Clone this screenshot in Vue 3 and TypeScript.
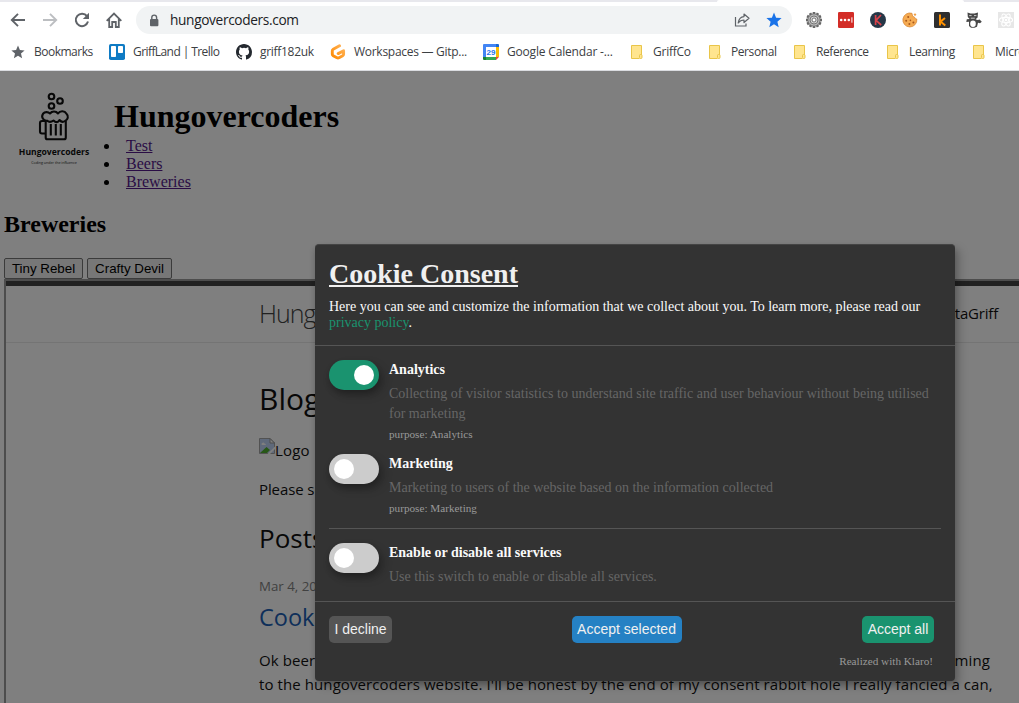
<script setup lang="ts">
interface Bookmark { icon: string; label: string; spacing: number }
interface Service { title: string; text: string; purpose: string; on: boolean }

const bookmarks: Bookmark[] = [
  { icon: 'star', label: 'Bookmarks', spacing: -0.5 },
  { icon: 'trello', label: 'GriffLand | Trello', spacing: -0.58 },
  { icon: 'github', label: 'griff182uk', spacing: -0.3 },
  { icon: 'gitpod', label: 'Workspaces — Gitp...', spacing: -0.28 },
  { icon: 'calendar', label: 'Google Calendar -...', spacing: -0.18 },
  { icon: 'folder', label: 'GriffCo', spacing: -0.25 },
  { icon: 'folder', label: 'Personal', spacing: -0.42 },
  { icon: 'folder', label: 'Reference', spacing: -0.42 },
  { icon: 'folder', label: 'Learning', spacing: -0.38 },
  { icon: 'folder', label: 'Microsoft', spacing: -0.3 },
]
const services: Service[] = [
  {
    title: 'Analytics',
    text: 'Collecting of visitor statistics to understand site traffic and user behaviour without being utilised for marketing',
    purpose: 'purpose: Analytics',
    on: true,
  },
  {
    title: 'Marketing',
    text: 'Marketing to users of the website based on the information collected',
    purpose: 'purpose: Marketing',
    on: false,
  },
]
const teeth = Array.from({ length: 12 }, (_, i) => i * 30)
</script>

<template>
  <div class="window">
    <div class="chrome">
      <div class="tabs"><div class="tab"></div></div>
      <div class="toolbar">
        <svg class="nav" viewBox="0 0 16 16"><path d="M15 8H2M8 1.8L1.8 8L8 14.2" fill="none" stroke="#5f6368" stroke-width="1.9" /></svg>
        <svg class="nav" viewBox="0 0 16 16"><path d="M1 8H14M8 1.8L14.2 8L8 14.2" fill="none" stroke="#bcbec1" stroke-width="1.9" /></svg>
        <svg class="nav" viewBox="0 0 16 16"><path d="M13 4.2A6.2 6.2 0 1 0 14 9.6" fill="none" stroke="#5f6368" stroke-width="2" /><path d="M15 .8V7H8.8Z" fill="#5f6368" /></svg>
        <svg class="nav" viewBox="0 0 16 16"><path d="M3.2 7V15H6.2V10H9.8V15H12.8V7M.7 8.8L8 1.5L15.3 8.8" fill="none" stroke="#5f6368" stroke-width="1.8" /></svg>
        <div class="omnibox">
          <svg class="lock" viewBox="0 0 10 13"><rect x="1" y="5" width="8.4" height="7.2" rx="1" fill="#5f6368" /><path d="M2.8 5.5V3.5a2.4 2.4 0 0 1 4.8 0V5.5" fill="none" stroke="#5f6368" stroke-width="1.4" /></svg>
          <span class="url">hungovercoders.com</span>
          <svg class="share" viewBox="0 0 16 16"><path d="M1.5 5V14H12V11.5" fill="none" stroke="#5f6368" stroke-width="1.2" /><path d="M4.2 11C4.8 6.5 7 4.8 10 4.6V2L15 6.3L10 10.5V8C7.5 8 5.8 8.8 4.2 11Z" fill="none" stroke="#5f6368" stroke-width="1.2" stroke-linejoin="round" /></svg>
          <svg class="fav" viewBox="0 0 16 16"><path d="M8 .6L10.1 5.7L15.6 6.1L11.4 9.7L12.7 15.2L8 12.2L3.3 15.2L4.6 9.7L.4 6.1L5.9 5.7Z" fill="#1a73e8" /></svg>
        </div>
        <div class="extensions">
          <svg viewBox="0 0 16 16">
            <g fill="#666"><rect v-for="a in teeth" :key="a" x="6.7" y="0" width="2.6" height="4" :transform="`rotate(${a} 8 8)`" /></g>
            <circle cx="8" cy="8" r="6.2" fill="#b5b5b5" stroke="#666" stroke-width=".8" /><circle cx="8" cy="8" r="4" fill="#d5d5d5" stroke="#777" /><circle cx="8" cy="8" r="2" fill="#fff" stroke="#555" stroke-width=".8" />
          </svg>
          <svg viewBox="0 0 16 16"><rect width="16" height="16" rx="1.3" fill="#d32d27" /><g fill="#fff"><circle cx="3.2" cy="8" r="1.3" /><circle cx="7" cy="8" r="1.3" /><circle cx="10.8" cy="8" r="1.3" /><rect x="13.4" y="5.3" width="1" height="5.4" /></g></svg>
          <svg viewBox="0 0 16 16"><circle cx="8" cy="8" r="8" fill="#263747" /><path d="M5.6 3V13M11 3L6 8.3L11.2 13" fill="none" stroke="#d8434b" stroke-width="1.7" /></svg>
          <svg viewBox="0 0 16 16"><path d="M10 1.3A7 7 0 1 0 14.8 7Q13 7.2 12.6 5.2Q10 5 10 1.3Z" fill="#f5ab52" stroke="#d5832f" stroke-width=".7" /><circle cx="13" cy="2.6" r="1.2" fill="#efa04a" /><g fill="#a9581c"><circle cx="6.2" cy="5" r="1" /><circle cx="4.2" cy="8.8" r="1" /><circle cx="8.4" cy="8.4" r=".8" /><circle cx="7.4" cy="12" r="1" /><circle cx="11.4" cy="10.5" r="1" /></g></svg>
          <svg viewBox="0 0 16 16"><rect width="16" height="16" rx="1.5" fill="#2f2f2f" /><path d="M6 2.5V13.5M11 6L6.5 9.6L11.3 13.5" fill="none" stroke="#ff9100" stroke-width="2" /></svg>
          <svg viewBox="0 0 16 16"><path d="M1.5 .5L4.5 1.5H8.5L12 .5L11.6 5.5L9.6 7.2Q11.5 8.6 13.6 7.6L15.8 9.8L14 11.2L12 10.8L11 14.8L8.5 15.7H5L3 14V9.8L.3 10L.8 7.2L3.6 7L1.8 5Z" fill="#484848" /><ellipse cx="7" cy="11.7" rx="2.8" ry="3.3" fill="#fff" /><path d="M3.2 3.6H5.6M8 3.6H10.4M4.8 6.2H8.8" stroke="#ccc" stroke-width="1" /></svg>
          <svg viewBox="0 0 16 16"><rect width="16" height="16" fill="#e7e7e7" /><g fill="none" stroke="#fff" stroke-width="1.1"><ellipse cx="8" cy="8" rx="6.6" ry="2.6" /><ellipse cx="8" cy="8" rx="6.6" ry="2.6" transform="rotate(60 8 8)" /><ellipse cx="8" cy="8" rx="6.6" ry="2.6" transform="rotate(120 8 8)" /></g><circle cx="8" cy="8" r="1.3" fill="#fff" /></svg>
        </div>
      </div>
      <div class="bookmarks">
        <div v-for="b in bookmarks" :key="b.label" class="bookmark">
          <svg v-if="b.icon === 'star'" viewBox="0 0 16 16"><path d="M8 1.5L9.9 6L14.6 6.4L11 9.5L12.1 14.2L8 11.7L3.9 14.2L5 9.5L1.4 6.4L6.1 6Z" fill="#5f6368" /></svg>
          <svg v-else-if="b.icon === 'trello'" viewBox="0 0 16 16"><rect width="16" height="16" rx="1.8" fill="#0f7bc4" /><rect x="2" y="2" width="5" height="11" rx=".8" fill="#fff" /><rect x="9" y="2" width="5" height="7" rx=".8" fill="#fff" /></svg>
          <svg v-else-if="b.icon === 'github'" viewBox="0 0 16 16"><path fill="#24292f" d="M8 0C3.58 0 0 3.58 0 8c0 3.54 2.29 6.53 5.47 7.59.4.07.55-.17.55-.38 0-.19-.01-.82-.01-1.49-2.01.37-2.53-.49-2.69-.94-.09-.23-.48-.94-.82-1.13-.28-.15-.68-.52-.01-.53.63-.01 1.08.58 1.23.82.72 1.21 1.87.87 2.33.66.07-.52.28-.87.51-1.07-1.78-.2-3.64-.89-3.64-3.95 0-.87.31-1.59.82-2.15-.08-.2-.36-1.02.08-2.12 0 0 .67-.21 2.2.82a7.6 7.6 0 0 1 4 0c1.53-1.04 2.2-.82 2.2-.82.44 1.1.16 1.92.08 2.12.51.56.82 1.27.82 2.15 0 3.07-1.87 3.75-3.65 3.95.29.25.54.73.54 1.48 0 1.07-.01 1.93-.01 2.2 0 .21.15.46.55.38A8.01 8.01 0 0 0 16 8c0-4.42-3.58-8-8-8Z" /></svg>
          <svg v-else-if="b.icon === 'gitpod'" viewBox="0 0 16 16"><defs><linearGradient id="pod" x1="1" y1="0" x2="0" y2="1"><stop offset="0" stop-color="#ffb45b" /><stop offset="1" stop-color="#ff8a00" /></linearGradient></defs><path d="M9.5 1.8L3.2 5.3Q2.3 5.8 2.3 6.8V10.3Q2.3 11.2 3.2 11.7L7 13.8Q8 14.3 9 13.8L12.7 11.7Q13.6 11.2 13.6 10.2V6.7L8.2 9.6" fill="none" stroke="url(#pod)" stroke-width="2.9" stroke-linecap="round" stroke-linejoin="round" /></svg>
          <svg v-else-if="b.icon === 'calendar'" viewBox="0 0 16 16"><path d="M0 1a1 1 0 0 1 1-1H13V3H3V13H0Z" fill="#4285f4" /><path d="M13 0H15a1 1 0 0 1 1 1V3H13Z" fill="#1967d2" /><path d="M13 3H16V13H13Z" fill="#fbbc04" /><path d="M3 13H13V16H3Z" fill="#34a853" /><path d="M0 13H3V16H1a1 1 0 0 1-1-1Z" fill="#188038" /><path d="M13 13H16L13 16Z" fill="#ea4335" /><rect x="3" y="3" width="10" height="10" fill="#fff" /><text x="8" y="11" text-anchor="middle" class="day">29</text></svg>
          <svg v-else viewBox="0 0 16 16"><path d="M2.5 1.5H12.5V11M10.5 14.5H2.5V1.5" fill="#ffe58f" stroke="#e9c549" /><path d="M3 2H12V11L10 14H3Z" fill="#ffe58f" /><rect x="10.5" y="10.5" width="2.5" height="4" rx="1" fill="#ffe58f" stroke="#e9c549" /></svg>
          <span :style="{ letterSpacing: b.spacing + 'px' }">{{ b.label }}</span>
        </div>
      </div>
    </div>

    <div class="page">
      <header class="site">
        <div class="brand">
          <svg class="mug" viewBox="0 0 32 50" fill="none" stroke="#111" stroke-width="2.1" stroke-linejoin="round"><circle cx="13.5" cy="4.5" r="2.8" /><circle cx="22" cy="9" r="2.8" /><circle cx="13.5" cy="14" r="2.8" /><path d="M9 28.7A4.4 4.4 0 0 1 5 21.8A4.8 4.8 0 0 1 12 21.5A5 5 0 0 1 20 21.5A5 5 0 0 1 28.5 21.8A4.3 4.3 0 0 1 27 29Q24 31 21.5 28Q19 32 15.5 28.5Q12 31 9 28.7Z" /><path d="M7.7 29V45.5Q7.7 47.3 9.5 47.3H26Q27.8 47.3 27.8 45.5V29M7.5 29H4Q2 29 2 31V39.5Q2 41.5 4 41.5H7.5M12.8 32V43.5M17.8 32V43.5M22.8 32V43.5" /></svg>
          <div class="brand-name">Hungovercoders</div>
          <div class="brand-tag">Coding under the influence</div>
        </div>
        <div>
          <h1>Hungovercoders</h1>
          <ul><li><a>Test</a></li><li><a>Beers</a></li><li><a>Breweries</a></li></ul>
        </div>
      </header>
      <h2 class="section">Breweries</h2>
      <div class="tabs-row"><button class="rebel">Tiny Rebel</button><button class="devil">Crafty Devil</button></div>
      <div class="frame">
        <div class="blog-header"><span class="blog-title">Hungovercoders</span><span class="author">DataGriff</span></div>
        <div class="blog">
          <h1>Blogs</h1>
          <div class="logo-row">
            <svg viewBox="0 0 16 16"><path d="M.5 .5H11L15.5 5V15.5H.5Z" fill="#bfd3f5" stroke="#a4a4a4" /><path d="M11 .5V5H15.5Z" fill="#fff" stroke="#999" /><path d="M2.5 6.2a1.6 1.6 0 0 1 3-.8 1.2 1.2 0 0 1 1.2 1.7H2.8Z" fill="#fff" /><path d="M1 15L7.5 9L11 12L8 15Z" fill="#4fae2e" /><path d="M8.5 16L16 8.5V11L11 16Z" fill="#fff" /></svg><span>Logo</span>
          </div>
          <p class="please">Please see the posts below.</p>
          <h2>Posts</h2>
          <div class="date">Mar 4, 2022</div>
          <h3>Cookie Consent</h3>
          <div class="article">
            <div class="split"><span>Ok beer</span><span>ming</span></div>
            <div class="line">to the hungovercoders website. I'll be honest by the end of my consent rabbit hole I really fancied a can,</div>
            <div class="line">but I actually learnt a lot and wanted to add some of how I got on here as others may need help.</div>
          </div>
        </div>
      </div>
      <div class="dim"></div>
    </div>

    <section class="modal">
      <header class="modal-header">
        <h1>Cookie Consent</h1>
        <p>Here you can see and customize the information that we collect about you. To learn more, please read our<br><a>privacy policy</a>.</p>
      </header>
      <div class="modal-body">
        <div v-for="s in services" :key="s.title" class="service">
          <div class="switch" :class="{ on: s.on }"><i></i></div>
          <div class="info">
            <b>{{ s.title }}</b>
            <p>{{ s.text }}</p>
            <small>{{ s.purpose }}</small>
          </div>
        </div>
        <div class="service all">
          <div class="switch"><i></i></div>
          <div class="info"><b>Enable or disable all services</b><p>Use this switch to enable or disable all services.</p></div>
        </div>
      </div>
      <footer>
        <div class="actions"><button class="decline">I decline</button><button class="selected">Accept selected</button><button class="accept">Accept all</button></div>
        <div class="powered">Realized with Klaro!</div>
      </footer>
    </section>
  </div>
</template>

<style>
body { margin: 0; overflow: hidden; }
</style>
<style scoped>
* { box-sizing: border-box; }
h1, h2, h3, p, ul { margin: 0; }
svg { display: block; flex: none; }
button { font-family: "Liberation Sans", Arial, sans-serif; padding: 0; white-space: nowrap; }
.window { position: relative; width: 1019px; height: 703px; overflow: hidden; display: flex; flex-direction: column; background: #fff; font-family: "Liberation Serif", "Times New Roman", serif; }
.chrome { height: 71px; flex: none; border-bottom: 1px solid #dadce0; font-family: "Open Sans", "Noto Sans", sans-serif; color: #3c4043; }
.tabs { height: 2px; background: #e8e8ed; display: flex; }
.tab { margin-left: 717px; width: 247px; background: #fff; border-radius: 2px 2px 0 0; }
.toolbar { height: 36px; display: flex; align-items: center; padding-left: 10px; }
.nav { width: 16px; height: 16px; margin-right: 16px; }
.omnibox { width: 656px; height: 28px; margin-left: -2px; border-radius: 14px; background: #f1f3f4; display: flex; align-items: center; padding: 0 10px 0 13px; }
.lock { width: 10px; height: 13px; }
.url { margin-left: 11px; font-size: 13.7px; color: #202124; line-height: 20px; letter-spacing: -.35px; }
.share { width: 16px; height: 16px; margin-left: auto; }
.fav { width: 16px; height: 16px; margin-left: 16px; }
.extensions { display: flex; gap: 16px; margin-left: 14px; }
.extensions svg { width: 16px; height: 16px; }
.bookmarks { display: grid; height: 28px; padding-left: 10px; grid-template-columns: 99px 127px 94px 153px 146px 78px 85px 93px 86px 90px; align-items: center; }
.bookmark { display: flex; gap: 8px; align-items: center; font-size: 12px; line-height: 18px; white-space: nowrap; }
.bookmark svg { width: 16px; height: 16px; }
.day { font: bold 8px "Liberation Sans", sans-serif; fill: #1a73e8; }

.page { position: relative; flex: 1; min-height: 0; overflow: hidden; padding: 8px 0 0 4px; background: #fff; color: #000; }
.dim { position: absolute; inset: 0; background: rgba(0, 0, 0, .5); }
.site { display: flex; height: 131px; }
.brand { width: 100px; display: flex; flex-direction: column; align-items: center; padding-top: 13px; flex: none; font-family: "Open Sans", sans-serif; color: #111; white-space: nowrap; }
.mug { width: 32px; height: 50px; }
.brand-name { font-size: 8.6px; font-weight: 700; line-height: 12px; margin-top: 4px; }
.brand-tag { font-size: 3.6px; line-height: 6px; margin-top: 2px; color: #222; }
.site h1 { font-size: 32px; line-height: 37px; margin: 19px 0 0 10px; }
.site ul { padding-left: 16px; margin-top: 2px; font-size: 16px; line-height: 18px; }
.site li { padding-left: 6px; }
.site a { color: #551a8b; text-decoration: underline; }
.section { font-size: 24px; line-height: 28px; }
.tabs-row { margin-top: 20px; display: flex; gap: 4px; height: 21px; }
.tabs-row button { height: 21px; font-size: 13.33px; border: 1px solid #767676; border-radius: 2px; background: #efefef; color: #000; }
.rebel { width: 79px; }
.devil { width: 85px; }
.frame { width: 1100px; height: 500px; border: 2px solid #9a9a9a; font-family: "Open Sans", "Noto Sans", sans-serif; color: #111; }
.blog-header { width: 1013px; border-top: 5px solid #424242; border-bottom: 1px solid #e8e8e8; height: 62px; padding: 0 20px 2px 253px; display: flex; justify-content: space-between; align-items: center; }
.blog-title { font-size: 25px; font-weight: 300; letter-spacing: -1px; color: #424242; }
.author { font-size: 15px; letter-spacing: -.2px; margin-right: 1px; }
.blog { width: 1013px; padding: 36px 0 0 253px; }
.blog h1 { font-size: 30px; font-weight: 400; line-height: 40px; }
.logo-row { display: flex; align-items: center; margin-top: 19px; height: 24px; font-size: 15px; letter-spacing: .15px; }
.logo-row svg { width: 16px; height: 16px; margin-bottom: 8px; }
.please { font-size: 15px; line-height: 24px; margin-top: 15px; letter-spacing: -.1px; }
.blog h2 { font-size: 26px; font-weight: 400; line-height: 40px; margin-top: 17px; }
.date { font-size: 13.3px; line-height: 20px; margin-top: 18px; color: #828282; }
.blog h3 { font-size: 23.5px; line-height: 30px; font-weight: 400; margin-top: 6px; color: #1d5fb5; }
.article { margin-top: 16px; font-size: 15px; line-height: 24px; white-space: nowrap; letter-spacing: .09px; }
.split { display: flex; justify-content: space-between; width: 731px; }

.modal { position: absolute; left: 315px; top: 244px; width: 640px; height: 437px; display: flex; flex-direction: column; border-radius: 4px; background: #333; color: #fafafa; font-size: 14px; box-shadow: 0 4px 6px rgba(0, 0, 0, .2), 5px 5px 10px rgba(0, 0, 0, .19); border-top: 1px solid #444; }
.modal-header { height: 101px; padding: 13px 14px 0; border-bottom: 1px solid #555; flex: none; }
.modal-header h1 { font-size: 28px; line-height: 32px; text-decoration: underline; color: #f0f0f0; }
.modal-header p { margin-top: 9px; line-height: 16px; white-space: nowrap; }
.modal-header a { color: #1a936f; }
.modal-body { height: 255px; flex: none; padding: 14px 14px 0; }
.service { display: flex; gap: 10px; height: 94px; }
.service + .service { height: 74px; }
.service.all { border-top: 1px solid #555; padding-top: 14px; }
.switch { width: 50px; height: 30px; border-radius: 15px; background: #ccc; flex: none; padding: 5px; box-shadow: 0 4px 6px rgba(0, 0, 0, .2), 5px 5px 10px rgba(0, 0, 0, .19); }
.switch i { display: block; width: 20px; height: 20px; border-radius: 50%; background: #fff; }
.switch.on { background: #1a936f; }
.switch.on i { margin-left: 20px; }
.info { padding-top: 1px; }
.info b { display: block; line-height: 18px; }
.info p { color: #666; line-height: 20px; margin-top: 5px; }
.info small { display: block; font-size: 11.2px; line-height: 14px; margin-top: 3px; color: #999; }
footer { border-top: 1px solid #555; flex: 1; padding: 14px 14px 0; }
.actions { display: flex; justify-content: space-between; padding-right: 7px; }
.actions button { height: 27px; padding-bottom: 2px; border: 0; border-radius: 5px; color: #f0f0f0; font-size: 14px; }
.actions .decline { width: 63px; background: #555; }
.actions .selected { width: 110px; background: #2581c4; margin-left: -1px; }
.actions .accept { width: 72px; background: #1a936f; }
.powered { text-align: right; font-size: 11.2px; line-height: 14px; margin-top: 11px; padding-right: 8px; color: #999; }
</style>
